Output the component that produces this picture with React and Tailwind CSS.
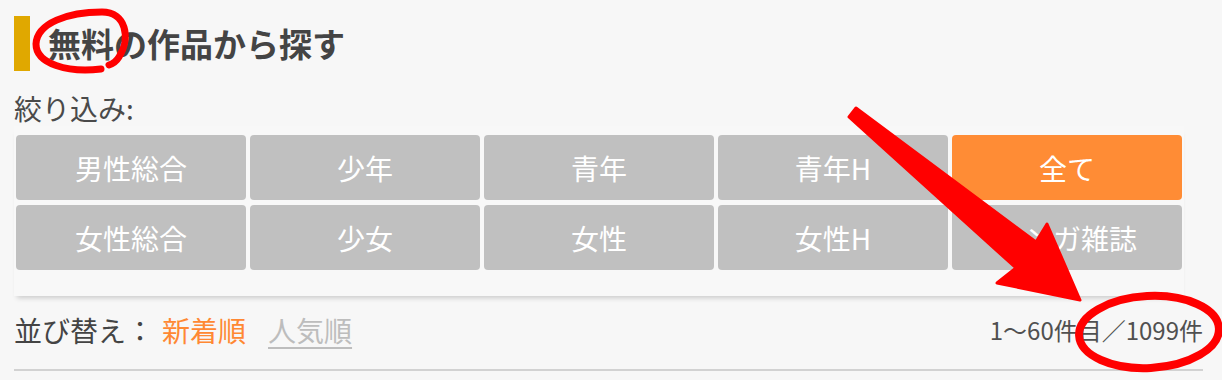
const FILTERS = [
  { label: '男性総合' }, { label: '少年' }, { label: '青年' }, { label: '青年H' }, { label: '全て', active: true },
  { label: '女性総合' }, { label: '少女' }, { label: '女性' }, { label: '女性H' }, { label: 'マンガ雑誌' },
];

const font = { fontFamily: '"Noto Sans CJK JP", "Noto Sans", sans-serif' };

function Annotations() {
  return (
    <svg className="absolute inset-0 pointer-events-none" width="1222" height="380" viewBox="0 0 1222 380">
      {/* loop round 無料 */}
      <path d="M101 69 C68 73 36 64 36 44 C37 23 68 12 102 12 C126 12 131 38 119 57 C116 62 112 64 109 65"
        fill="none" stroke="#ff0000" strokeWidth="7" strokeLinecap="round" />
      {/* arrow */}
      <polygon points="849,117 856,108 1036,242 1047,224 1080,300 997,283 1016,268" fill="#ff0000" strokeLinejoin="round" stroke="#ff0000" strokeWidth="3" />
      {/* ring round the count */}
      <ellipse cx="1149" cy="332" rx="70" ry="36" fill="none" stroke="#ff0000" strokeWidth="8" transform="rotate(-3 1149 332)" />
    </svg>
  );
}

export default function App() {
  return (
    <div className="relative w-[1222px] h-[380px] overflow-hidden bg-[#f7f7f7] pl-[14px] pt-[16px]" style={font}>
      <h2 className="flex items-center h-[55px] border-l-[16px] border-[#e0a800] pl-[18px] text-[33px] font-bold text-[#444]">無料の作品から探す</h2>

      <p className="mt-[19px] text-[28px] leading-[36px] text-[#4a4a4a]">絞り込み:</p>

      <div className="w-[1170px] px-[2px] pt-[9px] pb-[26px] bg-[#f8f8f8] shadow-[0_5px_5px_-3px_rgba(0,0,0,0.18)]">
        <div className="grid grid-cols-5 gap-x-[4px] gap-y-[5px]">
          {FILTERS.map(f => (
            <div key={f.label} className={`flex items-center justify-center h-[65px] rounded-[4px] text-[28px] text-white ${f.active ? 'bg-[#ff8c35]' : 'bg-[#c0c0c0]'}`}>
              {f.label}
            </div>
          ))}
        </div>
      </div>

      <div className="mt-[16px] flex items-center justify-between w-[1189px] h-[36px]">
        <div className="flex items-center text-[28px] leading-[36px]">
          <span className="text-[#444]">並び替え：</span>
          <span className="ml-[8px] text-[#ff8833]">新着順</span>
          <span className="ml-[22px] text-[#bdbdbd] underline underline-offset-[5px] decoration-[2px]">人気順</span>
        </div>
        <span className="text-[24px] text-[#505050]">1〜60件目／1099件</span>
      </div>

      <div className="mt-[21px] w-[1189px] border-t-2 border-[#d2d2d2]" />

      <Annotations />
    </div>
  );
}
